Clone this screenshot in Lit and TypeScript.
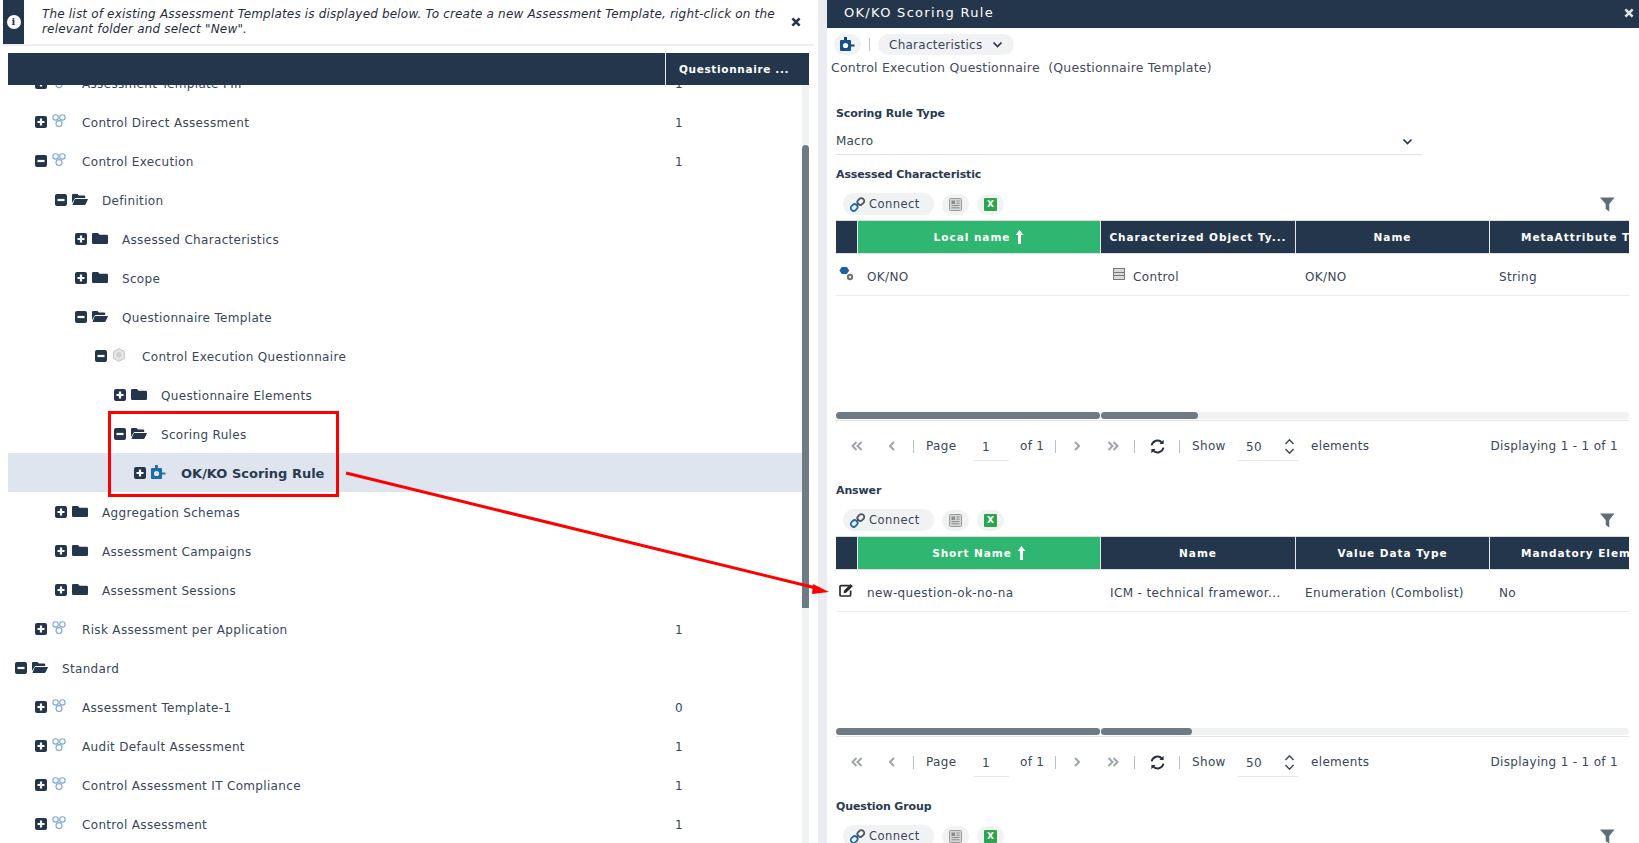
import { LitElement, html, css, svg } from "lit";
import { customElement } from "lit/decorators.js";

const box = (open: boolean) => html`<svg class="box" width="12" height="12" viewBox="0 0 12 12"><rect width="12" height="12" rx="2" fill="#24364b"/><path d="${open ? "M2.5 6h7" : "M2.5 6h7M6 2.5v7"}" stroke="#fff" stroke-width="2.2"/></svg>`;
const folderClosed = html`<svg class="ic" width="16" height="14" viewBox="0 0 16 14"><path d="M0 3.2Q0 2 1.2 2H6l1.5 1.8h7.2Q16 3.8 16 5v6.8Q16 13 14.8 13H1.2Q0 13 0 11.8z" fill="#24364b"/></svg>`;
const folderOpen = html`<svg class="ic" width="16" height="14" viewBox="0 0 16 14"><path d="M0 3Q0 2 1 2h4.5L7 3.6h5.2q1 0 1 1V6H4Q3 6 2.4 7L0 11z" fill="#24364b"/><path d="M3.4 7h12.2q.6 0 .3.6L13.6 12.3q-.4.7-1.2.7H.9q-.6 0-.3-.6L2.6 7.6Q2.9 7 3.4 7z" fill="#24364b"/></svg>`;
const tplIcon = html`<svg class="ic" width="14" height="14" viewBox="0 0 14 14" fill="none" stroke="#7ea6cf" stroke-width="1.1"><circle cx="3.6" cy="3.4" r="2.7"/><circle cx="10.4" cy="3.4" r="2.7"/><circle cx="7" cy="9.6" r="3"/></svg>`;
const qIcon = html`<svg class="ic" width="14" height="14" viewBox="0 0 14 14"><path d="M7 .6l5.6 3v6.8L7 13.4l-5.6-3V3.6z" fill="#e3e3e3" stroke="#c9c9c9"/><path d="M7 3.4l3 1.6v3.6L7 10.4 4 8.6V5z" fill="#cfcfcf" stroke="#eee" stroke-width=".7"/></svg>`;
const ruleIcon = html`<svg class="ic" width="15" height="15" viewBox="0 0 15 15"><rect x="4" y="0" width="3" height="3.5" fill="#2f6fa8"/><rect x="0" y="3" width="11" height="11" rx="1" fill="#1f6aa8"/><circle cx="5.5" cy="8.5" r="2.6" fill="#d9e6f2"/><rect x="11" y="7.5" width="3.5" height="2" fill="#2f6fa8"/></svg>`;
const ruleIconDark = html`<svg width="15" height="15" viewBox="0 0 15 15"><rect x="4" y="0" width="3" height="3.5" fill="#15426e"/><rect x="0" y="3" width="11" height="11" rx="1" fill="#15508a"/><circle cx="5.5" cy="8.5" r="2.6" fill="#fff"/><rect x="11" y="7.5" width="3.5" height="2" fill="#15426e"/></svg>`;
const chain = html`<svg width="15" height="15" viewBox="0 0 15 15" fill="none" stroke-width="1.8"><path d="M6.2 8.8l2.6-2.6" stroke="#555"/><rect x="8" y="1" width="5.6" height="7" rx="2.6" transform="rotate(45 10.8 4.5)" stroke="#4b5563"/><rect x="1.4" y="7" width="5.6" height="7" rx="2.6" transform="rotate(45 4.2 10.5)" stroke="#1f6aa8"/></svg>`;
const doc = html`<svg width="13" height="13" viewBox="0 0 13 13"><rect x=".5" y=".5" width="12" height="12" rx="1" fill="#d5d5d5" stroke="#9a9a9a"/><rect x="2.5" y="2.5" width="3.5" height="3.5" fill="#8c8c8c"/><path d="M7.5 3h3M7.5 5.2h3M2.5 7.6h8M2.5 9.8h8" stroke="#8c8c8c"/></svg>`;
const funnel = html`<svg width="15" height="15" viewBox="0 0 15 15"><path d="M0 .5h14.5L9.3 7v7.5L5.7 12V7z" fill="#5d6e78"/></svg>`;
const closeX = (c: string) => html`<svg width="10" height="10" viewBox="0 0 10 10"><path d="M1.4 1.4l7.2 7.2M8.6 1.4L1.4 8.6" stroke="${c}" stroke-width="2.6"/></svg>`;
const chevDown = (c: string, w = 11) => html`<svg width="${w}" height="7" viewBox="0 0 11 7" fill="none"><path d="M1.5 1.5l4 4 4-4" stroke="${c}" stroke-width="1.7"/></svg>`;
const upArrow = html`<svg width="9" height="14" viewBox="0 0 9 14"><path d="M4.5 0L8.4 5H6v9H3V5H.6z" fill="#fff"/></svg>`;
const valueIcon = html`<svg width="15" height="14" viewBox="0 0 15 14"><path d="M4.2 0h5l2.4 3.6-2.4 3.6h-5L1.8 3.6z" transform="translate(-1.4 -.2)" fill="#1f5fa0"/><circle cx="11" cy="10" r="3.2" fill="#777"/><circle cx="11" cy="10" r="1.1" fill="#fff"/></svg>`;
const tableIcon = html`<svg width="12" height="12" viewBox="0 0 12 12"><rect x=".5" y=".5" width="11" height="11" fill="#d9d9d9" stroke="#777"/><path d="M.5 4.5h11M.5 7.5h11" stroke="#777"/></svg>`;
const editIcon = html`<svg width="15" height="14" viewBox="0 0 15 14"><path d="M10.5 2.6H2Q1 2.6 1 3.6v8.4q0 1 1 1h8.6q1 0 1-1V7.4" fill="none" stroke="#2b2b2b" stroke-width="1.7"/><path d="M5 7.6L11.6 1l2.2 2.2L7.2 9.8 4.6 10.2z" fill="#2b2b2b"/></svg>`;
const pgFirst = html`<svg width="12" height="10" viewBox="0 0 12 10" fill="none" stroke="#9aa5ae" stroke-width="2"><path d="M5.5 1L1.5 5l4 4M10.5 1L6.5 5l4 4"/></svg>`;
const pgPrev = html`<svg width="6" height="10" viewBox="0 0 6 10" fill="none" stroke="#9aa5ae" stroke-width="2"><path d="M5 1L1 5l4 4"/></svg>`;
const pgNext = html`<svg width="6" height="10" viewBox="0 0 6 10" fill="none" stroke="#9aa5ae" stroke-width="2"><path d="M1 1l4 4-4 4"/></svg>`;
const pgLast = html`<svg width="12" height="10" viewBox="0 0 12 10" fill="none" stroke="#9aa5ae" stroke-width="2"><path d="M1.5 1l4 4-4 4M6.5 1l4 4-4 4"/></svg>`;
const refresh = html`<svg width="15" height="15" viewBox="0 0 15 15" fill="none" stroke="#24303c" stroke-width="1.9"><path d="M1.6 6.4A6 6 0 0 1 12 3.6"/><path d="M13.4 8.6A6 6 0 0 1 3 11.4"/><path d="M13.6.8v4.2H9.4z" fill="#24303c" stroke="none"/><path d="M1.4 14.2V10h4.2z" fill="#24303c" stroke="none"/></svg>`;
const updown = html`<svg width="11" height="17" viewBox="0 0 11 17" fill="none" stroke="#3a4a5c" stroke-width="1.5"><path d="M1.5 6l4-4.2 4 4.2M1.5 11l4 4.2 4-4.2"/></svg>`;

type Row = { lv: number; open: boolean; icon: "tpl" | "fo" | "fc" | "q" | "rule"; text: string; count?: string; sel?: boolean };
const indent = [7, 27, 47, 67, 87, 106, 126];
const rows: Row[] = [
  { lv: 1, open: false, icon: "tpl", text: "Assessment Template FIII", count: "1" },
  { lv: 1, open: false, icon: "tpl", text: "Control Direct Assessment", count: "1" },
  { lv: 1, open: true, icon: "tpl", text: "Control Execution", count: "1" },
  { lv: 2, open: true, icon: "fo", text: "Definition" },
  { lv: 3, open: false, icon: "fc", text: "Assessed Characteristics" },
  { lv: 3, open: false, icon: "fc", text: "Scope" },
  { lv: 3, open: true, icon: "fo", text: "Questionnaire Template" },
  { lv: 4, open: true, icon: "q", text: "Control Execution Questionnaire" },
  { lv: 5, open: false, icon: "fc", text: "Questionnaire Elements" },
  { lv: 5, open: true, icon: "fo", text: "Scoring Rules" },
  { lv: 6, open: false, icon: "rule", text: "OK/KO Scoring Rule", sel: true },
  { lv: 2, open: false, icon: "fc", text: "Aggregation Schemas" },
  { lv: 2, open: false, icon: "fc", text: "Assessment Campaigns" },
  { lv: 2, open: false, icon: "fc", text: "Assessment Sessions" },
  { lv: 1, open: false, icon: "tpl", text: "Risk Assessment per Application", count: "1" },
  { lv: 0, open: true, icon: "fo", text: "Standard" },
  { lv: 1, open: false, icon: "tpl", text: "Assessment Template-1", count: "0" },
  { lv: 1, open: false, icon: "tpl", text: "Audit Default Assessment", count: "1" },
  { lv: 1, open: false, icon: "tpl", text: "Control Assessment IT Compliance", count: "1" },
  { lv: 1, open: false, icon: "tpl", text: "Control Assessment", count: "1" },
];
const iconMap = { tpl: tplIcon, fo: folderOpen, fc: folderClosed, q: qIcon, rule: ruleIcon };

type Sec = { label: string; sort: string; heads: string[]; icon: unknown; cells: [unknown, string, unknown, string, string, string]; thumb: number };

@customElement("app-root")
export class AppRoot extends LitElement {
  static styles = css`
    :host { display: block; width: 1639px; height: 843px; position: relative; overflow: hidden; background: #fff;
      font-family: "DejaVu Sans", Verdana, sans-serif; font-size: 12px; color: #37465a; letter-spacing: .33px; }
    svg { display: block; flex: none; }
    .page { display: flex; height: 843px; }
    .left { width: 818px; flex: none; display: flex; flex-direction: column; }
    .gutter { width: 9px; flex: none; background: #ebecf2; }
    .right { width: 812px; flex: none; display: flex; flex-direction: column; overflow: hidden; }

    .info { margin-left: 3px; width: 810px; height: 44px; flex: none; display: flex; align-items: center; box-shadow: 0 2px 0 #eeeeee; }
    .info-band { width: 21px; height: 44px; background: #24364b; display: flex; align-items: center; justify-content: center; flex: none; }
    .info-dot { width: 14px; height: 14px; border-radius: 50%; background: #fff; color: #24364b; font: bold 10px/14px "DejaVu Serif", serif; text-align: center; letter-spacing: 0; }
    .info-text { margin-left: 18px; width: 742px; font-style: italic; font-size: 12px; line-height: 15px; color: #1f2d3d; letter-spacing: .18px; }
    .info-x { margin-left: 7px; }

    .tree { margin: 9px 0 0 8px; width: 801px; flex: 1; min-height: 0; display: flex; flex-direction: column; overflow: hidden; }
    .tree-head { height: 32px; flex: none; background: #24364b; display: flex; position: relative; z-index: 1; }
    .th-main { width: 657px; border-right: 1px solid #e8e8e8; }
    .th-q { padding-left: 13px; font-weight: bold; font-size: 10.5px; line-height: 33px; color: #fff; letter-spacing: .65px; white-space: nowrap; }
    .tree-body { flex: 1; min-height: 0; display: flex; overflow: hidden; }
    .tree-list { flex: 1; margin-top: -22px; }
    .t-row { height: 39px; display: flex; align-items: center; }
    .t-row.sel { background: #dfe5ef; }
    .t-main { width: 667px; flex: none; display: flex; align-items: center; white-space: nowrap; box-sizing: border-box; }
    .t-label { white-space: nowrap; padding-top: 2px; }
    .t-row.sel .t-label { font-weight: bold; font-size: 13px; color: #2a3a50; letter-spacing: 0; }
    .icwrap { width: 16px; margin-left: 5px; flex: none; margin-right: 14px; }
    .ic { margin-top: -1px; }
    .count { padding-top: 2px; }
    .vbar { width: 7px; flex: none; background: #f1f2f4; position: relative; }
    .vthumb { position: absolute; left: 0; right: 0; top: 60px; height: 463px; background: #6e7b85; border-radius: 4px 4px 0 0; }

    .r-head { height: 28px; box-sizing: border-box; flex: none; background: #24364b; color: #fff; display: flex; align-items: center; justify-content: space-between;
      padding: 0 5px 3px 17px; font-size: 13px; letter-spacing: 1.3px; }
    .r-tools { display: flex; align-items: center; margin: 6px 0 0 7px; height: 21px; flex: none; }
    .round { width: 27px; height: 21px; border-radius: 11px; background: #f1f2f4; display: flex; align-items: center; justify-content: center; flex: none; }
    .vsep { width: 1px; height: 13px; background: #b9c4cc; margin: 0 8px; flex: none; }
    .pill { height: 21px; border-radius: 11px; background: #f1f2f4; display: flex; align-items: center; gap: 10px; padding: 0 11px; letter-spacing: .25px; font-size: 12px; }
    .crumb { margin: 4px 0 0 4px; height: 17px; line-height: 17px; flex: none; white-space: pre; color: #3f4c5e; font-size: 12.5px; letter-spacing: .22px; }
    .f-label { font-weight: bold; font-size: 11px; color: #2a3a50; margin-left: 9px; height: 16px; line-height: 16px; flex: none; letter-spacing: -.12px; }
    .f-label.first { margin-top: 30px; }
    .select { margin: 9px 0 0 9px; width: 586px; height: 24px; flex: none; border-bottom: 1px solid #e2e2e2; display: flex; align-items: center; justify-content: space-between; padding: 0 9px 3px 0; box-sizing: border-box; letter-spacing: .2px; }
    .section { padding: 0 10px 0 9px; margin-top: 12px; flex: none; }
    .sec-label { font-weight: bold; font-size: 11px; line-height: 16px; height: 16px; color: #2a3a50; letter-spacing: -.12px; }
    .bar { display: flex; align-items: center; height: 22px; margin: 10px 0 5px 7px; gap: 8px; }
    .connect { height: 22px; width: 91px; box-sizing: border-box; padding-left: 7px; border-radius: 11px; background: #f1f2f4; display: flex; align-items: center; gap: 4px; font-size: 11.5px; letter-spacing: .45px; }
    .xls { width: 13px; height: 13px; background: #2da44e; color: #fff; font-size: 9px; font-weight: bold; line-height: 13px; text-align: center; border-radius: 1px; letter-spacing: 0; }
    .funnel { margin-left: auto; margin-right: 14px; }
    .grid { display: grid; grid-template-columns: 22px 243px 195px 194px 139px; border-top: 1px solid #dcdcdc; overflow: hidden; }
    .h { height: 32px; background: #24364b; border-right: 1px solid #e8e8e8; border-bottom: 1px solid #e0e0e0; display: flex; align-items: center; justify-content: center; color: #fff; font-weight: bold;
      font-size: 10.5px; letter-spacing: .97px; gap: 5px; white-space: nowrap; overflow: hidden; box-sizing: content-box; padding: 0; min-width: 0; }
    .h.sort { background: #2fb670; }
    .h.clip { justify-content: flex-start; padding-left: 31px; border-right: 0; }
    .c { height: 37px; padding-top: 4px; border-bottom: 1px solid #ececec; display: flex; align-items: center; padding-left: 9px; gap: 8px; white-space: nowrap; overflow: hidden; box-sizing: content-box; min-width: 0; letter-spacing: .37px; }
    .c.ico { padding-left: 3px; align-items: flex-start; padding-top: 0; height: 41px; width: 19px; }
    .c.ico svg { margin-top: 13px; }
    .c .ci { margin: -6px 0 0 3px; }
    .empty { height: 116px; }
    .hbar { height: 7px; background: #f1f2f4; border-radius: 4px; display: flex; gap: 1px; }
    .hthumb { height: 7px; background: #6e7b85; border-radius: 4px; flex: none; }
    .hline { height: 1px; background: #e4e4e4; margin-top: 1px; }
    .pager { height: 50px; display: flex; align-items: center; }
    .ps { width: 1px; height: 13px; background: #b4c2cc; flex: none; }
    .pinput { height: 28px; box-sizing: border-box; border-bottom: 1px solid #e6e6e6; display: flex; align-items: center; flex: none; margin-top: 2px; }
    .push { margin-left: auto; margin-right: 11px; }
    .arrow { position: absolute; left: 0; top: 0; pointer-events: none; }
  `;

  private section(s: Sec) {
    return html`<div class="section">
      <div class="sec-label">${s.label}</div>
      <div class="bar">
        <div class="connect">${chain}<span>Connect</span></div>
        <div class="round">${doc}</div>
        <div class="round"><div class="xls">X</div></div>
        <div class="funnel">${funnel}</div>
      </div>
      <div class="grid">
        <div class="h lead"></div>
        <div class="h sort"><span>${s.sort}</span>${upArrow}</div>
        <div class="h"><span>${s.heads[0]}</span></div>
        <div class="h"><span>${s.heads[1]}</span></div>
        <div class="h clip"><span>${s.heads[2]}</span></div>
        <div class="c ico">${s.icon}</div>
        <div class="c">${s.cells[1]}</div>
        <div class="c">${s.cells[2]}</div>
        <div class="c">${s.cells[3]}</div>
        <div class="c">${s.cells[4]}</div>
      </div>
      <div class="empty"></div>
      <div class="hbar"><div class="hthumb" style="width:264px"></div><div class="hthumb" style="width:${s.thumb}px"></div></div>
      <div class="hline"></div>
      <div class="pager">
        <div style="margin-left:15px">${pgFirst}</div>
        <div style="margin-left:26px">${pgPrev}</div>
        <div class="ps" style="margin-left:18px"></div>
        <span style="margin-left:12px;width:35px">Page</span>
        <div class="pinput" style="margin-left:13px;width:35px;padding-left:8px">1</div>
        <span style="margin-left:11px;width:35px">of 1</span>
        <div class="ps"></div>
        <div style="margin-left:18px">${pgNext}</div>
        <div style="margin-left:27px">${pgLast}</div>
        <div class="ps" style="margin-left:15px"></div>
        <div style="margin-left:15px">${refresh}</div>
        <div class="ps" style="margin-left:14px"></div>
        <span style="margin-left:12px;width:46px">Show</span>
        <div class="pinput" style="width:60px;padding-left:8px;justify-content:space-between;padding-right:3px"><span>50</span>${updown}</div>
        <span style="margin-left:13px">elements</span>
        <span class="push">Displaying 1 - 1 of 1</span>
      </div>
    </div>`;
  }

  render() {
    const sec1: Sec = { label: "Assessed Characteristic", sort: "Local name", heads: ["Characterized Object Ty...", "Name", "MetaAttribute Type"], icon: valueIcon,
      cells: [null, "OK/NO", html`<span class="ci">${tableIcon}</span>Control`, "OK/NO", "String", ""], thumb: 97 };
    const sec2: Sec = { label: "Answer", sort: "Short Name", heads: ["Name", "Value Data Type", "Mandatory Element"], icon: editIcon,
      cells: [null, "new-question-ok-no-na", "ICM - technical framewor...", "Enumeration (Combolist)", "No", ""], thumb: 91 };
    return html`
      <div class="page">
        <div class="left">
          <div class="info">
            <div class="info-band"><div class="info-dot">i</div></div>
            <div class="info-text">The list of existing Assessment Templates is displayed below. To create a new Assessment Template, right-click on the relevant folder and select "New".</div>
            <div class="info-x">${closeX("#24364b")}</div>
          </div>
          <div class="tree">
            <div class="tree-head"><div class="th-main"></div><div class="th-q">Questionnaire ...</div></div>
            <div class="tree-body">
              <div class="tree-list">
                ${rows.map((r) => html`<div class="t-row ${r.sel ? "sel" : ""}">
                  <div class="t-main" style="padding-left:${indent[r.lv]}px">
                    ${box(r.open)}<div class="icwrap">${iconMap[r.icon]}</div><span class="t-label">${r.text}</span>
                  </div>
                  <span class="count">${r.count ?? ""}</span>
                </div>`)}
              </div>
              <div class="vbar"><div class="vthumb"></div></div>
            </div>
          </div>
        </div>
        <div class="gutter"></div>
        <div class="right">
          <div class="r-head"><span>OK/KO Scoring Rule</span>${closeX("#dfe3e7")}</div>
          <div class="r-tools">
            <div class="round">${ruleIconDark}</div><div class="vsep"></div>
            <div class="pill"><span>Characteristics</span>${chevDown("#24364b")}</div>
          </div>
          <div class="crumb">Control Execution Questionnaire  (Questionnaire Template)</div>
          <div class="f-label first">Scoring Rule Type</div>
          <div class="select"><span>Macro</span>${chevDown("#24364b")}</div>
          ${this.section(sec1)}
          ${this.section(sec2)}
          <div class="section">
            <div class="sec-label">Question Group</div>
            <div class="bar">
              <div class="connect">${chain}<span>Connect</span></div>
              <div class="round">${doc}</div>
              <div class="round"><div class="xls">X</div></div>
              <div class="funnel">${funnel}</div>
            </div>
          </div>
        </div>
      </div>
      <svg class="arrow" width="1639" height="843">
        ${svg`<rect x="109.5" y="412.5" width="228" height="83" fill="none" stroke="#ff0000" stroke-width="3"/>
        <path d="M346 473L816 588" stroke="#ff0000" stroke-width="3"/>
        <path d="M829 592L813 584L812 594z" fill="#ff0000"/>`}
      </svg>`;
  }
}
